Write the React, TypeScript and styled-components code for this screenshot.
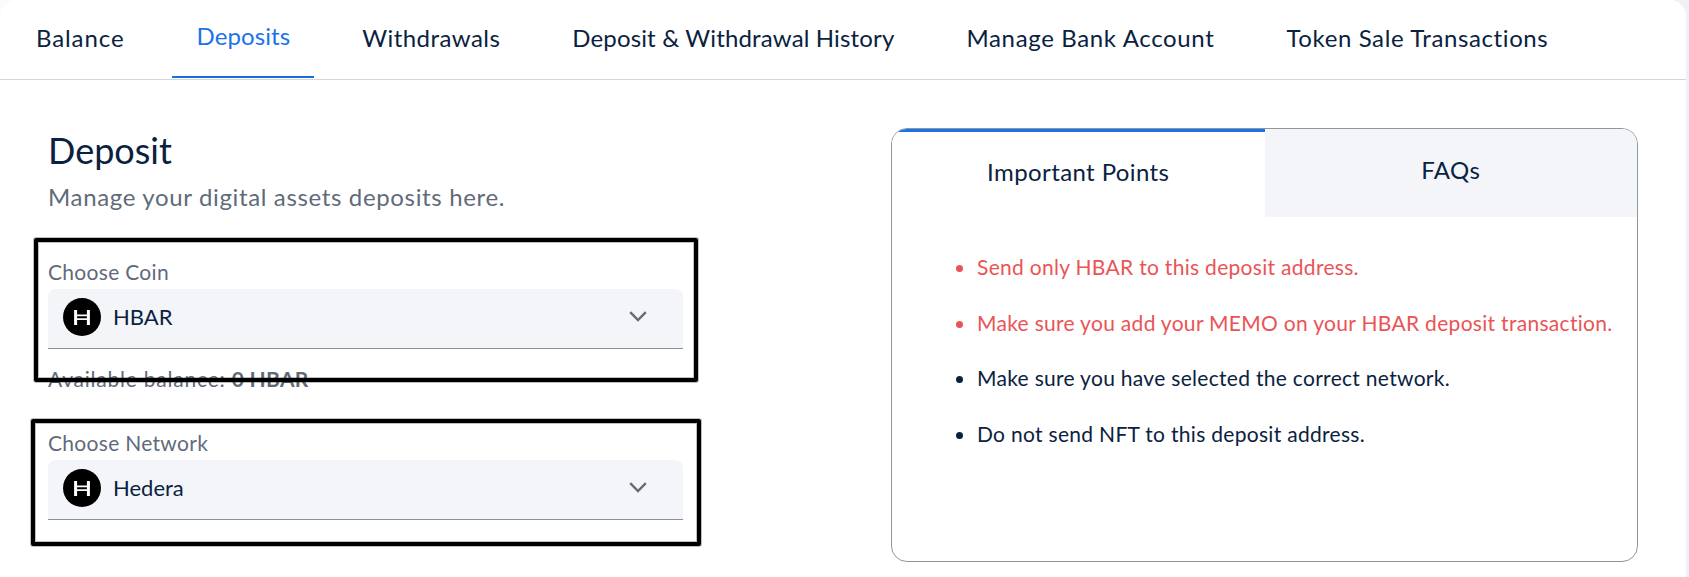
import styled, { createGlobalStyle } from 'styled-components';

const GlobalStyle = createGlobalStyle`
  html, body {
    margin: 0;
    padding: 0;
    background: #ffffff;
  }
  body {
    font-family: 'Lato', 'Noto Sans', sans-serif;
    color: #0a2240;
  }
`;

const Page = styled.div`
  width: 1689px;
  height: 577px;
  overflow: hidden;
  background: linear-gradient(90deg, #fbfbfd 50%, #f0f1f6 50%);
`;

const Card = styled.div`
  width: 1686px;
  height: 577px;
  background: #fff;
  border-radius: 16px 16px 0 0;
`;

const TabBar = styled.div`
  display: flex;
  gap: 24px;
  height: 79px;
  padding-left: 12px;
  border-bottom: 1px solid #d3d6da;
`;

const TabItem = styled.div<{ $active?: boolean; $spacing: number }>`
  height: 78px;
  padding: ${(p) => (p.$active ? '22px' : '24px')} 24px 0;
  font-size: 24px;
  line-height: 28px;
  letter-spacing: ${(p) => p.$spacing}px;
  color: ${(p) => (p.$active ? '#1a73e8' : '#0a2240')};
  border-bottom: 2px solid ${(p) => (p.$active ? '#1a6fd8' : 'transparent')};
  box-sizing: border-box;
  white-space: nowrap;
`;

const Content = styled.div`
  display: flex;
  justify-content: space-between;
  padding: 48px 48px 0;
`;

const LeftColumn = styled.div`
  width: 635px;
`;

const Title = styled.h1`
  margin: 0;
  font-size: 36px;
  line-height: 44px;
  font-weight: 400;
  color: #0a2240;
`;

const Subtitle = styled.p`
  margin: 10px 0 47px;
  font-size: 24px;
  line-height: 30px;
  letter-spacing: 0.65px;
  color: #5f6b7a;
`;

const Field = styled.div`
  position: relative;
  margin-top: 38px;
`;

const FieldLabel = styled.div`
  font-size: 21px;
  line-height: 26px;
  letter-spacing: 0.3px;
  color: #5f6b7a;
`;

const Select = styled.div`
  display: flex;
  align-items: center;
  height: 60px;
  margin-top: 4px;
  padding: 0 36px 4px 15px;
  background: #f3f5f9;
  border-bottom: 1px solid #8a9199;
  border-radius: 8px 8px 0 0;
  box-sizing: border-box;
`;

const SelectText = styled.span`
  flex: 1;
  margin-left: 12px;
  font-size: 22px;
  color: #0a2240;
`;

const Balance = styled.div`
  margin-top: 17px;
  font-size: 21px;
  line-height: 26px;
  letter-spacing: 0.78px;
  color: #5f6b7a;

  b {
    font-weight: 700;
    letter-spacing: 0.3px;
  }
`;

// the black frames were drawn over the screenshot, so they sit on top of the fields
const Annotation = styled.div<{ $top: number; $left: number; $width: number; $height: number }>`
  position: absolute;
  top: ${(p) => p.$top}px;
  left: ${(p) => p.$left}px;
  width: ${(p) => p.$width}px;
  height: ${(p) => p.$height}px;
  border: 4px solid #000;
  border-radius: 2px;
  box-shadow: 0 0 0 1px rgba(0, 0, 0, 0.25), inset 0 0 0 1px rgba(0, 0, 0, 0.25);
  box-sizing: border-box;
  pointer-events: none;
`;

const InfoPanel = styled.div`
  width: 747px;
  height: 434px;
  border: 1px solid #8f979c;
  border-radius: 16px;
  overflow: hidden;
  box-sizing: border-box;
`;

const PanelTabs = styled.div`
  display: flex;
  height: 88px;
`;

const PanelTab = styled.div<{ $active?: boolean }>`
  flex: 1;
  text-align: center;
  font-size: 24px;
  line-height: 28px;
  letter-spacing: 0.4px;
  padding-top: ${(p) => (p.$active ? '26px' : '27px')};
  background: ${(p) => (p.$active ? '#fff' : '#f3f5f9')};
  border-top: ${(p) => (p.$active ? '3px solid #1a73e8' : 'none')};
  color: #0a2240;
`;

const PointList = styled.ul`
  list-style: none;
  margin: 0;
  padding: 22px 0 0 85px;
`;

const Point = styled.li<{ $warn?: boolean }>`
  position: relative;
  height: 55.7px;
  font-size: 21px;
  line-height: 56px;
  letter-spacing: 0.3px;
  color: ${(p) => (p.$warn ? '#ea5455' : '#0a2240')};
  white-space: nowrap;

  &::before {
    content: '';
    position: absolute;
    left: -21px;
    top: 26px;
    width: 7px;
    height: 7px;
    border-radius: 50%;
    background: currentColor;
  }
`;

const CoinIcon = () => (
  <svg width="38" height="38" viewBox="0 0 38 38">
    <circle cx="19" cy="19" r="19" fill="#000" />
    <path d="M12.6 12v15M25.4 12v15" stroke="#fff" strokeWidth="3" fill="none" />
    <path d="M12.6 17.3h12.8M12.6 21.2h12.8" stroke="#fff" strokeWidth="1.8" fill="none" />
  </svg>
);

const Chevron = () => (
  <svg width="18" height="11" viewBox="0 0 18 11">
    <path d="M1.2 1.2L9 9l7.8-7.8" stroke="#666b70" strokeWidth="2.4" fill="none" />
  </svg>
);

// Lato runs a little differently per word from the original font
const tabs = [
  { label: 'Balance', spacing: 0.9 },
  { label: 'Deposits', spacing: 0.1 },
  { label: 'Withdrawals', spacing: 0.45 },
  { label: 'Deposit & Withdrawal History', spacing: 0.15 },
  { label: 'Manage Bank Account', spacing: 0.65 },
  { label: 'Token Sale Transactions', spacing: 0.6 },
];

const App = () => (
  <Page>
    <GlobalStyle />
    <Card>
      <TabBar>
        {tabs.map((tab) => (
          <TabItem key={tab.label} $active={tab.label === 'Deposits'} $spacing={tab.spacing}>
            {tab.label}
          </TabItem>
        ))}
      </TabBar>
      <Content>
        <LeftColumn>
          <Title>Deposit</Title>
          <Subtitle>Manage your digital assets deposits here.</Subtitle>
          <Field>
            <FieldLabel>Choose Coin</FieldLabel>
            <Select>
              <CoinIcon />
              <SelectText>HBAR</SelectText>
              <Chevron />
            </Select>
            <Balance>
              Available balance: <b>0 HBAR</b>
            </Balance>
            <Annotation $top={-21} $left={-14} $width={664} $height={144} />
          </Field>
          <Field>
            <FieldLabel>Choose Network</FieldLabel>
            <Select>
              <CoinIcon />
              <SelectText>Hedera</SelectText>
              <Chevron />
            </Select>
            <Annotation $top={-11} $left={-17} $width={670} $height={127} />
          </Field>
        </LeftColumn>
        <InfoPanel>
          <PanelTabs>
            <PanelTab $active>Important Points</PanelTab>
            <PanelTab>FAQs</PanelTab>
          </PanelTabs>
          <PointList>
            <Point $warn>Send only HBAR to this deposit address.</Point>
            <Point $warn>Make sure you add your MEMO on your HBAR deposit transaction.</Point>
            <Point>Make sure you have selected the correct network.</Point>
            <Point>Do not send NFT to this deposit address.</Point>
          </PointList>
        </InfoPanel>
      </Content>
    </Card>
  </Page>
);

export default App;
